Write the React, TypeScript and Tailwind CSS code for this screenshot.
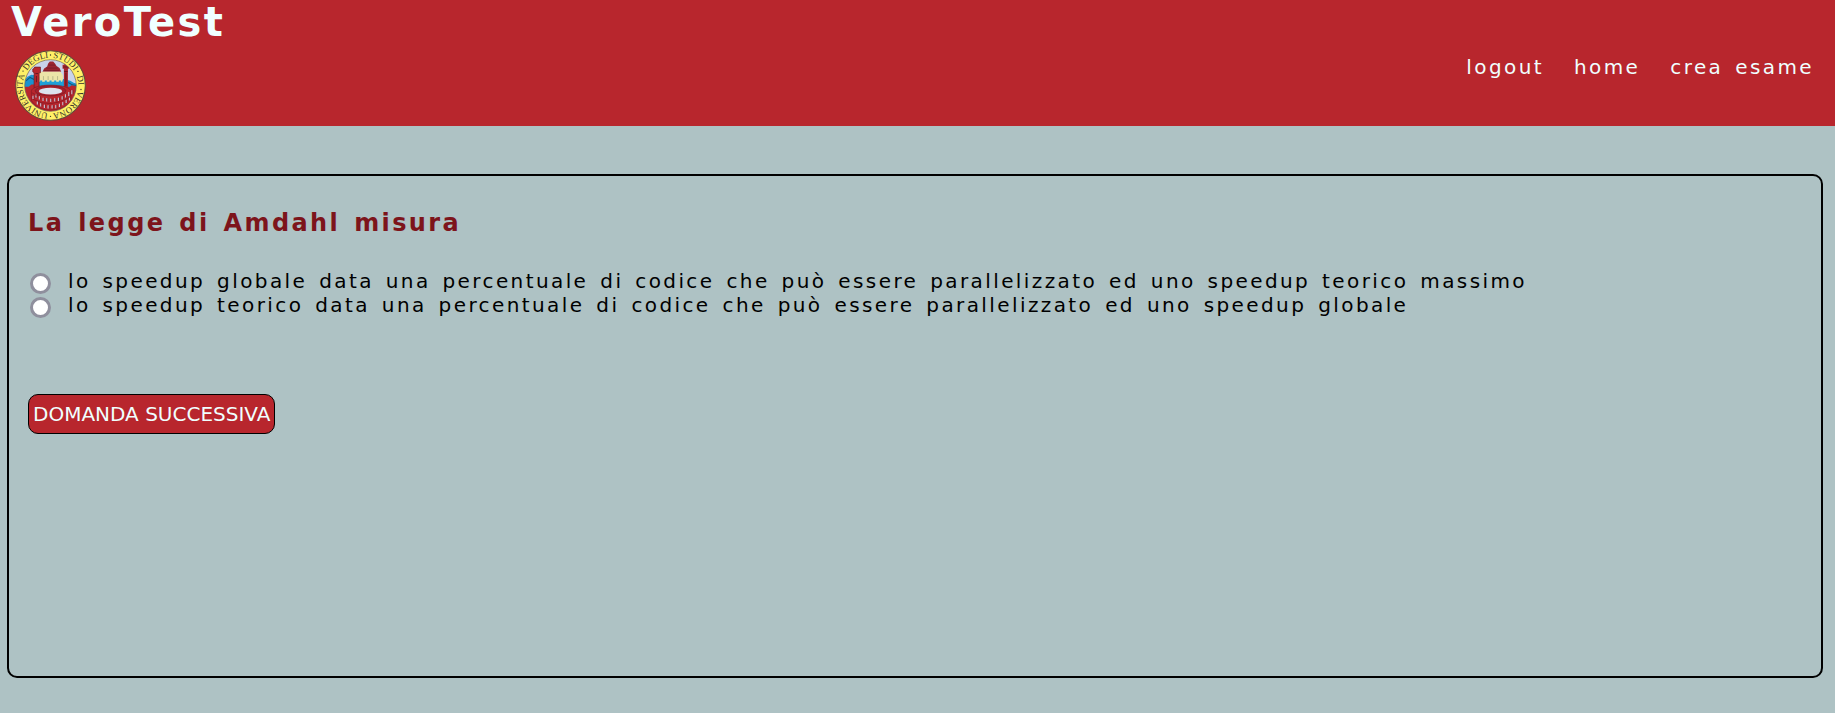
import { useState } from "react";

const links = ["logout", "home", "crea esame"];

const options = [
  "lo speedup globale data una percentuale di codice che può essere parallelizzato ed uno speedup teorico massimo",
  "lo speedup teorico data una percentuale di codice che può essere parallelizzato ed uno speedup globale",
];

const sealWords = [
  { text: "UNIVERSITÀ", offset: "16.4%" },
  { text: "DEGLI", offset: "41.3%" },
  { text: "STUDI", offset: "58.8%" },
  { text: "DI", offset: "72.2%" },
  { text: "VERONA", offset: "88.4%" },
];

const sealDots = [
  [123, 214],
  [41, 79],
  [123, 31],
  [205, 80],
  [214, 134],
];

// Arches of the arena: x, y, height
const arches = [
  [80, 146, 12], [90, 152, 12], [101, 156, 12], [112, 158, 12], [124, 159, 12], [136, 158, 12],
  [147, 156, 12], [158, 152, 12], [168, 146, 12], [178, 139, 14], [187, 134, 14],
  [84, 167, 12], [94, 173, 12], [105, 177, 12], [116, 179, 12], [128, 179, 12], [139, 178, 12],
  [150, 174, 12], [160, 169, 12], [170, 162, 12], [180, 155, 12], [71, 150, 12],
];

function Seal() {
  return (
    <svg viewBox="17 16 212 212" className="size-[71px]" role="img" aria-label="Università degli Studi di Verona">
      <defs>
        <path id="seal-ring" d="M123 205A83 83 0 0 1 123 39A83 83 0 0 1 123 205" />
        <clipPath id="seal-inner">
          <circle cx="123" cy="122" r="77" />
        </clipPath>
      </defs>
      <circle cx="123" cy="122" r="104" fill="#fff066" stroke="#5c4a3a" strokeWidth="3" />
      <g clipPath="url(#seal-inner)">
        <rect x="45" y="44" width="156" height="156" fill="#c9d3ea" />
        <path d="M40 112L54 96L66 90L84 92V134H40ZM158 102L182 108L192 114L205 118V140H158Z" fill="#1a93cf" />
        <path d="M50 108L62 98L74 104M176 113L188 120L200 122" stroke="#15557c" strokeWidth="3" fill="none" />
        <path d="M99 81L104 71L113 65L116 56L121 50H131L137 57L141 64L150 70L155 81Z" fill="#9c2630" />
        <path d="M104 77H150M110 70H144M117 61H136" stroke="#6b1a25" strokeWidth="2" />
        <path d="M76 88L96 81H153L160 92V108H76Z" fill="#ece5a8" />
        <path d="M88 96V108M102 94V106M116 94V106M130 94V106M144 94V106" stroke="#a3a77c" strokeWidth="2" />
        <path d="M76 107H162V134H76Z" fill="#1fa0d8" />
        <path d="M84 108H158" stroke="#e8e2a8" strokeWidth="5" strokeDasharray="8 6" fill="none" />
        <path d="M45 126H58L66 119H76L84 132L104 126H144L158 130L162 126H180L186 121L200 124V150L192 185L160 202H84L46 165Z" fill="#b8262d" />
        <path d="M70 73L75 70V67H93V84H89V128H74V84L70 81Z" fill="#b8262d" stroke="#681923" strokeWidth="2" />
        <path d="M78 86H86M81 94V112" stroke="#681923" strokeWidth="3" />
        <path d="M165 50L169 47L173 50V60H178V72H175V146H163V72H159V60H164Z" fill="#a7232d" />
        <path d="M161 67H177M164 80H174M169 84V124" stroke="#641820" strokeWidth="3" />
        <path d="M66 139C67 126 95 121 123 121S181 126 184 139V168C169 187 151 194 123 195S77 184 66 167Z" fill="#b8262d" stroke="#821a25" strokeWidth="2" />
        <ellipse cx="123" cy="138" rx="46" ry="15" fill="#a51f2b" stroke="#76202b" strokeWidth="2" />
        <ellipse cx="123" cy="139" rx="35" ry="10" fill="#dce2ee" />
        {arches.map(([x, y, h]) => (
          <g key={`${x}-${y}`}>
            <path d={`M${x - 2} ${y + h}V${y + 3}Q${x} ${y} ${x + 2} ${y + 3}V${y + h}Z`} fill="#cbbfd0" />
            <path d={`M${x + 3} ${y + 2}V${y + h}`} stroke="#6c1824" strokeWidth="2" />
          </g>
        ))}
        <path d="M70 163Q123 192 181 157M68 144Q78 153 92 151" stroke="#7c1722" strokeWidth="2" fill="none" />
      </g>
      <circle cx="123" cy="122" r="77" fill="none" stroke="#6d6150" strokeWidth="2" />
      <g fill="#34302a" fontFamily="Liberation Serif, serif" fontSize="26" textAnchor="middle">
        {sealWords.map((word) => (
          <text key={word.text}>
            <textPath href="#seal-ring" startOffset={word.offset}>
              {word.text}
            </textPath>
          </text>
        ))}
      </g>
      {sealDots.map(([x, y]) => (
        <circle key={`${x}-${y}`} cx={x} cy={y} r="2" fill="#34302a" />
      ))}
    </svg>
  );
}

export default function App() {
  const [answer, setAnswer] = useState<number | null>(null);

  return (
    <div className="flex min-h-screen flex-col bg-[#aec2c4] font-['DejaVu_Sans',sans-serif] text-xl leading-6 tracking-[0.12em] text-black [word-spacing:0.16em]">
      <header className="flex items-center justify-between bg-[#b8262d] pr-[21px] pb-[5px] text-[#f0ffff]">
        <div className="pl-[11px]">
          <h1 className="text-[40px] leading-[44px] font-bold">VeroTest</h1>
          <div className="mt-[6px] pl-1 tracking-normal [word-spacing:normal]">
            <Seal />
          </div>
        </div>
        <nav className="flex gap-[30px] pt-3">
          {links.map((link) => (
            <a key={link} href="#">
              {link}
            </a>
          ))}
        </nav>
      </header>

      <main className="mt-12 mr-3 mb-[35px] ml-[7px] flex-1 rounded-[10px] border-2 border-black px-[19px] pt-[33px]">
        <form onSubmit={(event) => event.preventDefault()}>
          <fieldset>
            <legend className="text-2xl leading-7 font-bold text-[#7d141b]">La legge di Amdahl misura</legend>
            <div className="mt-8">
              {options.map((option, index) => (
                <label key={option} className="flex items-start">
                  <input
                    type="radio"
                    name="answer"
                    checked={answer === index}
                    onChange={() => setAnswer(index)}
                    className="mt-1 mr-[17px] -mb-1 ml-[2px] size-[21px] shrink-0 appearance-none rounded-full border-3 border-[#8f8f9d] bg-white checked:border-[#0060df] checked:bg-[#0060df] checked:shadow-[inset_0_0_0_2px_white]"
                  />
                  <span>{option}</span>
                </label>
              ))}
            </div>
          </fieldset>
          <button
            type="submit"
            className="mt-[77px] h-10 rounded-[10px] border border-black bg-[#b8262d] px-1 tracking-normal text-[#f0ffff] [word-spacing:normal]"
          >
            DOMANDA SUCCESSIVA
          </button>
        </form>
      </main>
    </div>
  );
}
